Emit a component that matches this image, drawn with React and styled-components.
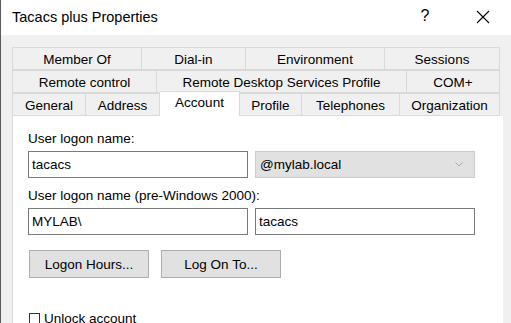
import React from 'react';
import styled, { createGlobalStyle } from 'styled-components';

const GlobalStyle = createGlobalStyle`
  html, body {
    margin: 0;
    padding: 0;
    background: #f0f0f0;
  }
  body {
    font-family: 'Segoe UI', 'Liberation Sans', Arial, sans-serif;
    color: #000;
  }
`;

const tabRows = [
  [
    { label: 'Member Of', width: 130 },
    { label: 'Dial-in', width: 104 },
    { label: 'Environment', width: 139 },
    { label: 'Sessions', width: 115 },
  ],
  [
    { label: 'Remote control', width: 145 },
    { label: 'Remote Desktop Services Profile', width: 250 },
    { label: 'COM+', width: 93 },
  ],
  [
    { label: 'General', width: 74 },
    { label: 'Address', width: 74 },
    { label: 'Account', width: 80, active: true },
    { label: 'Profile', width: 62 },
    { label: 'Telephones', width: 98 },
    { label: 'Organization', width: 100 },
  ],
];

export default function App() {
  return (
    <>
      <GlobalStyle />
      <Window>
        <TitleBar>
          <Title>Tacacs plus Properties</Title>
          <TitleButtons>
            <HelpButton>?</HelpButton>
            <CloseButton>
              <svg width="14" height="14" viewBox="0 0 14 14">
                <path d="M1 1L13 13M13 1L1 13" stroke="#000" strokeWidth="1.1" fill="none" />
              </svg>
            </CloseButton>
          </TitleButtons>
        </TitleBar>

        <Body>
          <Tabs>
            {tabRows.map((row, i) => (
              <TabRow key={i}>
                {row.map((tab) => (
                  <Tab key={tab.label} $width={tab.width} $active={tab.active}>
                    {tab.label}
                  </Tab>
                ))}
              </TabRow>
            ))}
          </Tabs>

          <Panel>
            <Label>User logon name:</Label>
            <FieldRow>
              <TextBox>tacacs</TextBox>
              <Select>
                <span>@mylab.local</span>
                <svg width="8" height="5" viewBox="0 0 8 5">
                  <path d="M0.5 0.5L4 4L7.5 0.5" stroke="#a8a8a8" strokeWidth="1" fill="none" />
                </svg>
              </Select>
            </FieldRow>

            <Label>User logon name (pre-Windows 2000):</Label>
            <FieldRow>
              <TextBox>MYLAB\</TextBox>
              <TextBox>tacacs</TextBox>
            </FieldRow>

            <ButtonRow>
              <Button>Logon Hours...</Button>
              <Button>Log On To...</Button>
            </ButtonRow>

            <CheckRow>
              <CheckBox />
              <span>Unlock account</span>
            </CheckRow>
          </Panel>
        </Body>
      </Window>
    </>
  );
}

const Window = styled.div`
  width: 511px;
  height: 323px;
  overflow: hidden;
  box-sizing: border-box;
  border-left: 1px solid #5a5a5a;
  background: #f0f0f0;
  display: flex;
  flex-direction: column;
`;

const TitleBar = styled.div`
  height: 35px;
  flex: none;
  background: #fff;
  display: flex;
  align-items: center;
  justify-content: space-between;
  padding-left: 11px;
`;

const Title = styled.div`
  font-size: 14.5px;
  color: #000;
  margin-top: -1px;
`;

const TitleButtons = styled.div`
  display: flex;
  align-items: center;
`;

const HelpButton = styled.div`
  width: 46px;
  text-align: center;
  font-size: 16px;
  margin-right: 12px;
  margin-top: -4px;
`;

const CloseButton = styled.div`
  width: 46px;
  display: flex;
  justify-content: center;
  margin-right: 5px;
  margin-top: -1px;
`;

const Body = styled.div`
  flex: 1;
  padding: 12px 0 0 11px;
  display: flex;
  flex-direction: column;
`;

const Tabs = styled.div`
  display: flex;
  flex-direction: column;
  width: 488px;
`;

const TabRow = styled.div`
  display: flex;
  height: 23px;
`;

const Tab = styled.div`
  box-sizing: border-box;
  width: ${({ $width }) => $width}px;
  height: ${({ $active }) => ($active ? '25px' : '23px')};
  margin-top: ${({ $active }) => ($active ? '-2px' : '0')};
  border: 1px solid #d9d9d9;
  border-left-width: 0;
  border-bottom-width: ${({ $active }) => ($active ? '0' : '1px')};
  &:first-child {
    border-left-width: 1px;
  }
  background: ${({ $active }) => ($active ? '#fff' : '#f0f0f0')};
  font-size: 13.5px;
  display: flex;
  align-items: ${({ $active }) => ($active ? 'flex-start' : 'center')};
  padding-top: ${({ $active }) => ($active ? '3px' : '1px')};
  justify-content: center;
  white-space: nowrap;
  position: relative;
  z-index: ${({ $active }) => ($active ? 1 : 0)};
`;

const Panel = styled.div`
  flex: 1;
  width: 491px;
  box-sizing: border-box;
  background: #fff;
  border-left: 1px solid #d9d9d9;
  padding: 14px 0 0 15px;
  display: flex;
  flex-direction: column;
  font-size: 13.5px;
`;

const Label = styled.div`
  height: 21px;
  line-height: 17px;
  font-size: 13.5px;
`;

const FieldRow = styled.div`
  display: flex;
  gap: 7px;
  margin-bottom: 9px;
`;

const TextBox = styled.div`
  box-sizing: border-box;
  width: 220px;
  height: 27px;
  border: 1px solid #7a7a7a;
  padding: 0 3px;
  display: flex;
  align-items: center;
  font-size: 13.5px;
`;

const Select = styled.div`
  box-sizing: border-box;
  width: 220px;
  height: 27px;
  border: 1px solid #cccccc;
  background: #e1e1e1;
  padding: 0 11px 0 4px;
  display: flex;
  align-items: center;
  justify-content: space-between;
  font-size: 13.5px;
`;

const ButtonRow = styled.div`
  display: flex;
  gap: 12px;
  margin-top: 6px;
  padding-left: 1px;
`;

const Button = styled.div`
  box-sizing: border-box;
  width: 120px;
  height: 28px;
  border: 1px solid #adadad;
  background: #e1e1e1;
  display: flex;
  align-items: center;
  justify-content: center;
  font-size: 13.5px;
`;

const CheckRow = styled.div`
  display: flex;
  align-items: center;
  gap: 4px;
  margin-top: 33px;
  padding-left: 1px;
  font-size: 13.5px;
`;

const CheckBox = styled.div`
  box-sizing: border-box;
  width: 11px;
  height: 11px;
  border: 1px solid #333;
  background: #fff;
`;
